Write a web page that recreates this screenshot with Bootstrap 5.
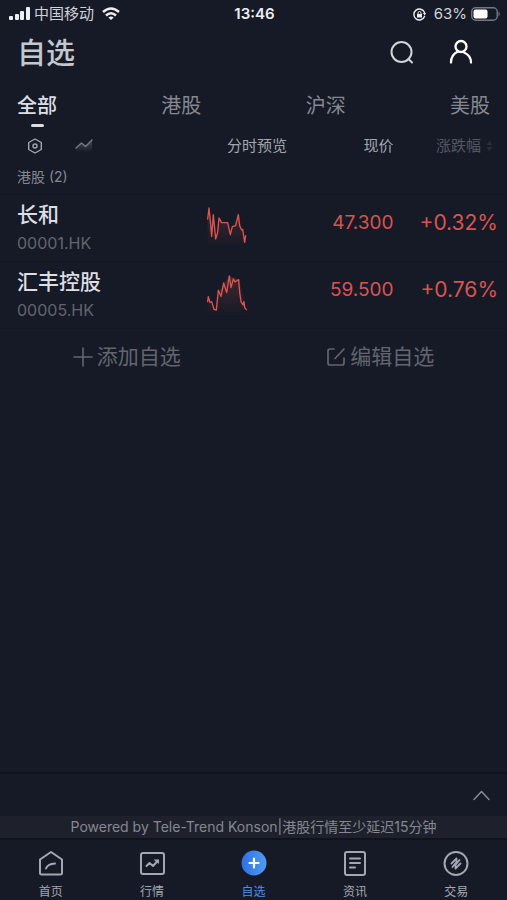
<!DOCTYPE html>
<html lang="zh-CN">
<head>
<meta charset="utf-8">
<meta name="viewport" content="width=device-width, initial-scale=1">
<title>自选</title>
<link href="https://cdn.jsdelivr.net/npm/bootstrap@5.3.0/dist/css/bootstrap.min.css" rel="stylesheet">
<style>
:root{--ink:#161a26;--soft:#d0d3da;--dim:#858891;--faint:#62656f;--red:#d9534f;--blue:#4a8ff0}
body{background:var(--ink);color:var(--soft);font-family:Inter,"Noto Sans CJK SC",sans-serif;font-size:14px;line-height:20px}
svg{display:block;fill:none;stroke:currentColor;stroke-linecap:round;stroke-linejoin:round}
.btn,.btn:hover{color:inherit}
.status-bar{height:28px;color:#eceef2;font-size:15px;display:grid;grid-template-columns:1fr auto 1fr;padding:0 6px 0 8px}
.carrier{color:#d0d3da}
.page-title{font-size:29px;line-height:40px;font-weight:500;color:#c5c7ce}
.title-bar{height:50px;padding:2px 32px 0 17px}
.title-bar button{width:30px;height:30px}
.market-tabs{padding:14px 17px 0;height:54px}
.market-tabs a{font-size:20px;line-height:28px;color:var(--dim);text-decoration:none}
.market-tabs a.active{color:#dcdee4;font-weight:500}
.market-tabs a.active::after{content:"";display:block;width:13px;height:3px;margin:4px auto 0;border-radius:2px;background:#dcdee4}
.quotes{table-layout:fixed;width:100%}
.quotes th,.quotes td{padding:0;font-weight:400}
.quotes thead th{height:27px;color:#a3a6af;font-size:15px;text-align:right;vertical-align:middle}
.quotes .c-name{width:38%;padding-left:17px;text-align:left}
.c-chart{width:19%}.c-price{width:21%}.c-change{width:22%}
.quotes .c-chart,.quotes .c-price{padding-right:2px}
.quotes .c-change{padding-right:9px}
.quotes thead .c-name{padding-left:27px}
.quotes thead .c-change{color:#535762}
.quotes .group-row th{height:35px;padding:2px 0 0 17px;color:var(--dim)}
.stock-row>*{height:67px;border-top:1px solid #141722}
.stock-name{font-size:21px;line-height:28px;font-weight:500;color:#dcdee4}
.stock-code{font-size:16px;line-height:24px;color:var(--faint);margin-top:2px}
.quotes td.c-chart{padding-left:14px}
.quotes td.c-price,.quotes td.c-change{color:var(--red);text-align:right;padding-bottom:10px}
.quotes td.c-price{font-size:19px}
.quotes td.c-change{font-size:21px}
.spark{stroke:#de5450;stroke-width:4}
.list-actions{height:56px;border-top:1px solid #141722;color:var(--faint)}
.list-actions button{font-size:21px;line-height:28px}
.index-panel{height:44px;border-top:2px solid #10131c;padding-right:17px;color:#8b8e97}
.source-note{background:#1e212c;color:var(--dim);height:24px;font-size:14px;border-bottom:2px solid #10131c}
.app-nav{height:60px}
.app-nav a{color:#a4a7b0;text-decoration:none;font-size:12px;line-height:16px;padding-top:10px}
.app-nav a.active{color:var(--blue)}
.app-nav svg{margin-bottom:8px}
</style>
<script src="https://cdn.jsdelivr.net/npm/bootstrap@5.3.0/dist/js/bootstrap.bundle.min.js"></script>
</head>
<body>
<div class="min-vh-100 d-flex flex-column">
<div class="status-bar align-items-center">
  <div class="d-flex align-items-center">
    <svg width="22" height="14" viewBox="0 0 22 14"><g fill="currentColor" stroke="none"><rect x="1" y="9" width="4" height="4" rx="1"/><rect x="7" y="7" width="4" height="6" rx="1"/><rect x="12" y="4" width="4" height="9" rx="1"/><rect x="18" y="0" width="4" height="13" rx="1"/></g></svg>
    <span class="carrier ms-1">中国移动</span>
    <svg class="ms-2" width="18" height="14" viewBox="0 0 18 14"><path d="M1 5Q9-2 17 5M4 8.500Q9 4 14 8.500" stroke-width="2.600" stroke-linecap="butt"/><path d="M6.300 10.500Q9 8.500 11.700 10.500L9 13Z" fill="currentColor" stroke="none"/></svg>
  </div>
  <strong class="fw-semibold">13:46</strong>
  <div class="d-flex align-items-center justify-content-end">
    <svg width="13" height="13" viewBox="0 0 13 13"><path d="M11.500 4.500A5.500 5.500 0 1 0 11.500 8.500" stroke-width="1.400"/><path d="M9.800 5h3.200l-1.200 2.500z" fill="currentColor" stroke="none"/><rect x="4" y="6" width="5" height="3.500" fill="currentColor" stroke="none"/><path d="M5 6V5a1.500 1.500 0 0 1 3 0v1"/></svg>
    <span class="carrier ms-1 ps-1">63%</span>
    <svg class="ms-1" width="30" height="14" viewBox="0 0 30 14"><rect x=".7" y=".7" width="25.500" height="12.600" rx="4" stroke="#74777f" stroke-width="1.400"/><rect x="2.500" y="2.500" width="14" height="9" rx="2" fill="#fff" stroke="none"/><path d="M27.500 4.500q2.500 2.500 0 5z" fill="#74777f" stroke="none"/></svg>
  </div>
</div>

<header class="title-bar d-flex align-items-center">
  <h1 class="page-title mb-0 me-auto">自选</h1>
  <button class="btn p-0 border-0 me-4" type="button" aria-label="搜索"><svg width="30" height="30" viewBox="0 0 30 30" stroke-width="2"><circle cx="14.500" cy="13" r="10"/><path d="m21.500 20 3.500 3.500"/></svg></button>
  <button class="btn p-0 border-0 ms-1 text-white" type="button" aria-label="我的"><svg width="30" height="30" viewBox="0 0 30 30" stroke-width="2.300"><circle cx="16" cy="7.500" r="5.500"/><path d="M6 23.500C6 17.500 9.500 14 13 12.500M19 13.500q7 3 7 10"/></svg></button>
</header>

<nav class="market-tabs d-flex justify-content-between">
  <a class="active" href="#" aria-current="page">全部</a><a href="#">港股</a><a href="#">沪深</a><a href="#">美股</a>
</nav>

<main class="flex-grow-1">
  <table class="quotes">
    <thead>
      <tr>
        <th class="c-name"><div class="d-flex align-items-center">
          <button class="btn p-0 border-0" type="button" aria-label="设置"><svg width="16" height="16" viewBox="0 0 16 16" stroke="#73767f" stroke-width="1.400"><path d="m8 1 6.300 3.500v7L8 15l-6.300-3.500v-7z"/><circle cx="8" cy="8" r="2"/></svg></button>
          <button class="btn p-0 border-0 ms-4 ps-2" type="button" aria-label="走势图"><svg width="18" height="14" viewBox="0 0 18 14"><defs><linearGradient id="fade" x2="0" y2="1"><stop stop-color="#777a83" stop-opacity=".5"/><stop offset="1" stop-color="#777a83" stop-opacity="0"/></linearGradient></defs><path d="M1 9 6.500 4l4 3.500L17 1v12H1z" fill="url(#fade)" stroke="none"/><path d="M1 9 6.500 4l4 3.500L17 1" stroke="#73767f" stroke-width="1.500"/></svg></button>
        </div></th>
        <th class="c-chart">分时预览</th><th class="c-price">现价</th>
        <th class="c-change"><div class="d-flex align-items-center justify-content-end">涨跌幅<svg class="ms-1 me-1" width="9" height="12" viewBox="0 0 9 12"><path d="m4.500 1 3 4h-6zM4.500 11l3-4h-6z" fill="#2b2e39" stroke="none"/></svg></div></th>
      </tr>
    </thead>
    <tbody>
      <tr class="group-row"><th colspan="4" scope="rowgroup">港股 (2)</th></tr>
      <tr class="stock-row">
        <th class="c-name" scope="row"><div class="stock-name">长和</div><div class="stock-code">00001.HK</div></th>
        <td class="c-chart"><svg class="spark" width="40" height="44" viewBox="36 36 120 132"><defs><linearGradient id="glow" x2="0" y2="1"><stop stop-color="#de5450" stop-opacity=".22"/><stop offset="1" stop-color="#de5450" stop-opacity="0"/></linearGradient></defs><path d="M38 78 42 43 50 127 55 62 62 135 72 72 80 86H98L106 122 130 62 151 145V158H38Z" fill="url(#glow)" stroke="none"/><path d="M38 75 42 42 46 80 50 127 55 62 62 135 68 115 72 72 80 86H98L106 122 112 98 122 95 130 62 134 96 140 108 143 106 149 145 152 125"/></svg></td>
        <td class="c-price">47.300</td><td class="c-change">+0.32%</td>
      </tr>
      <tr class="stock-row">
        <th class="c-name" scope="row"><div class="stock-name">汇丰控股</div><div class="stock-code">00005.HK</div></th>
        <td class="c-chart"><svg class="spark" width="40" height="44" viewBox="36 232 120 132"><path d="M38 310 61 342 72 285 103 241 132 252 154 342V358H38Z" fill="url(#glow)" stroke="none"/><path d="M38 318 40 303 45 320 50 318 57 341 64 343 70 284 78 302 86 262 95 291 103 241 108 276 115 250 120 259 131 252 134 290 138 318 144 328 147 318 149 336 154 342"/></svg></td>
        <td class="c-price">59.500</td><td class="c-change">+0.76%</td>
      </tr>
    </tbody>
  </table>
  <div class="list-actions row g-0 align-items-center">
    <div class="col-6 text-center"><button class="btn p-0 border-0" type="button"><span class="d-flex align-items-center gap-1"><svg width="20" height="20" viewBox="0 0 20 20" stroke-width="1.600"><path d="M10 1v18M1 10h18"/></svg>添加自选</span></button></div>
    <div class="col-6 text-center"><button class="btn p-0 border-0" type="button"><span class="d-flex align-items-center gap-1"><svg width="20" height="20" viewBox="0 0 20 20" stroke-width="1.700"><path d="M8 2H4Q2 2 2 4v12q0 2 2 2h12q2 0 2-2v-5M9 11.500 18 2"/></svg>编辑自选</span></button></div>
  </div>
</main>

<footer>
  <div class="index-panel d-flex align-items-center justify-content-end"><button class="btn p-0 border-0" type="button" aria-label="展开"><svg width="17" height="11" viewBox="0 0 17 11" stroke-width="1.400"><path d="m1 9.500 7.500-8 7.500 8"/></svg></button></div>
  <div class="source-note d-flex align-items-center justify-content-center">Powered by Tele-Trend Konson|港股行情至少延迟15分钟</div>
  <nav class="app-nav row g-0">
    <a class="col d-flex flex-column align-items-center" href="#"><svg width="26" height="26" viewBox="0 0 26 26" stroke-width="2"><path d="M2 9.500 13 2l11 7.500V23q0 1.500-2 1.500H4Q2 24.500 2 23zM8 18.500q1.500-4.500 9-5"/></svg>首页</a>
    <a class="col d-flex flex-column align-items-center" href="#"><svg width="26" height="26" viewBox="0 0 26 26" stroke-width="2"><rect x="2" y="3" width="23" height="21" rx="2"/><path d="m7.500 16 3-3 3.500 3 4.500-5"/><path d="M14.500 9.500H20V14z" fill="currentColor" stroke="none"/></svg>行情</a>
    <a class="col d-flex flex-column align-items-center active" href="#" aria-current="page"><svg width="26" height="26" viewBox="0 0 26 26"><defs><linearGradient id="disc" x1="0" x2="1"><stop stop-color="#2f70e3"/><stop offset="1" stop-color="#509cf0"/></linearGradient></defs><circle cx="13" cy="13" r="12.500" fill="url(#disc)" stroke="none"/><path d="M13 8.500v9M8.500 13h9" stroke="#fff" stroke-width="2.200"/></svg>自选</a>
    <a class="col d-flex flex-column align-items-center" href="#"><svg width="26" height="26" viewBox="0 0 26 26" stroke-width="2"><rect x="3" y="2" width="20" height="23" rx="2"/><path d="M8 8.500h10M8 13h10M8 17.500h5"/></svg>资讯</a>
    <a class="col d-flex flex-column align-items-center" href="#"><svg width="26" height="26" viewBox="0 0 26 26" stroke-width="2"><circle cx="13" cy="13.500" r="11.500"/><path d="m8.500 13.500 5-5v3.500l-4 5M17.500 13.500l-5 5V15l4-5" stroke-width="1.800"/></svg>交易</a>
  </nav>
</footer>
</div>
</body>
</html>
